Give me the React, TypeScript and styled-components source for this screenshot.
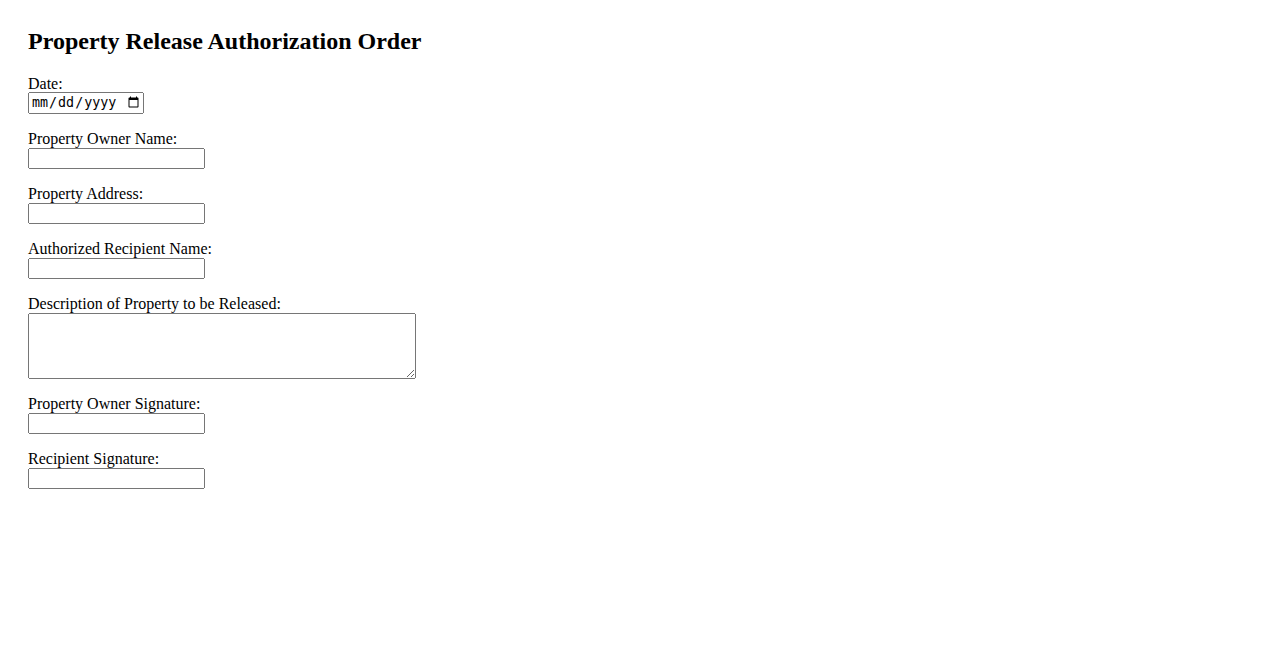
import styled, { createGlobalStyle } from "styled-components";

const GlobalStyle = createGlobalStyle`
  body {
    margin: 0;
    background: #ffffff;
    color: #000000;
    font-family: "Liberation Serif", "Times New Roman", serif;
    font-size: 16px;
  }
`;

const Page = styled.div`
  padding: 27px 28px;
`;

const Title = styled.h2`
  margin: 0 0 20px;
  font-size: 24px;
  line-height: 28px;
  font-weight: bold;
`;

const Field = styled.div`
  margin-bottom: 16px;
`;

const Label = styled.label`
  display: block;
  height: 18px;
  line-height: 18px;
`;

const Input = styled.input<{ $w?: number; $h?: number; $nudge?: number }>`
  display: block;
  box-sizing: border-box;
  width: ${(p) => p.$w ?? 177}px;
  height: ${(p) => p.$h ?? 21}px;
  margin: ${(p) => p.$nudge ?? 0}px 0 0;
`;

const Area = styled.textarea`
  display: block;
  box-sizing: border-box;
  width: 388px;
  height: 66px;
  margin: 0;
`;

const fields = [
  { id: "ownerName", label: "Property Owner Name:" },
  { id: "address", label: "Property Address:" },
  { id: "recipientName", label: "Authorized Recipient Name:" },
];

const signatures = [
  { id: "ownerSignature", label: "Property Owner Signature:" },
  { id: "recipientSignature", label: "Recipient Signature:" },
];

export default function App() {
  return (
    <Page>
      <GlobalStyle />
      <Title>Property Release Authorization Order</Title>
      <form>
        <Field>
          <Label htmlFor="date">Date:</Label>
          <Input type="date" id="date" $w={116} $h={22} $nudge={-1} />
        </Field>
        {fields.map((f) => (
          <Field key={f.id}>
            <Label htmlFor={f.id}>{f.label}</Label>
            <Input type="text" id={f.id} />
          </Field>
        ))}
        <Field>
          <Label htmlFor="description">Description of Property to be Released:</Label>
          <Area id="description" />
        </Field>
        {signatures.map((f) => (
          <Field key={f.id}>
            <Label htmlFor={f.id}>{f.label}</Label>
            <Input type="text" id={f.id} />
          </Field>
        ))}
      </form>
    </Page>
  );
}
